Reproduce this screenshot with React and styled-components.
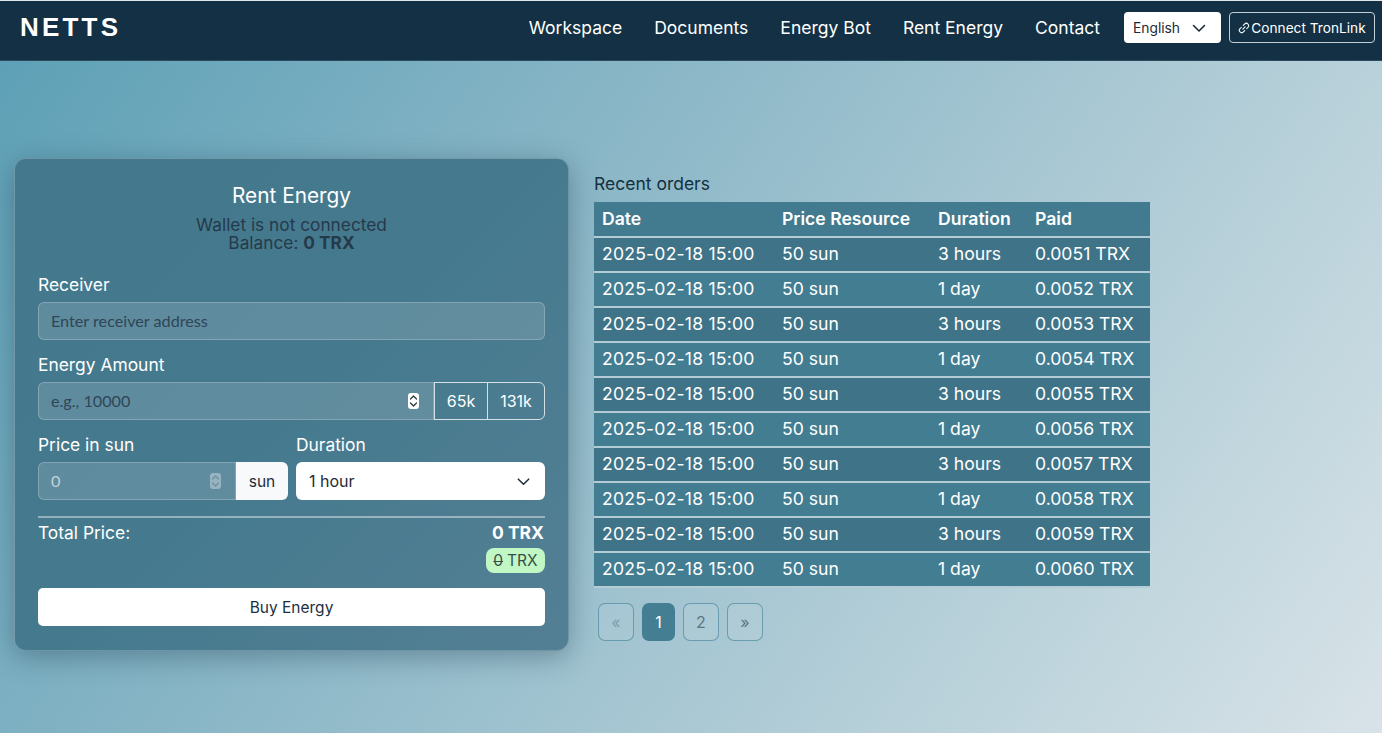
import React from "react";
import styled, { createGlobalStyle } from "styled-components";

const Global = createGlobalStyle`
  html, body { margin: 0; padding: 0; height: 100%; }
  body { font-family: Inter, "Liberation Sans", sans-serif; overflow: hidden; }
  * { box-sizing: border-box; }
`;
const Page = styled.div`
  width: 1382px; height: 733px; overflow: hidden; display: flex; flex-direction: column;
  background: linear-gradient(125deg, #5b9fb5 0%, #8db8c8 40%, #b5cfd8 72%, #d8e3e8 100%);
`;
const Nav = styled.header`
  height: 61px; flex: none; background: #133044; border-top: 1px solid #dfe8ec;
  border-bottom: 1px solid #2c4a5e;
  display: flex; align-items: center; padding: 0 7px 6px 20px;
`;
const Logo = styled.div`
  font-family: "Liberation Sans", Arial, sans-serif; font-weight: 700; font-size: 26px; color: #fff;
  letter-spacing: 3.2px; margin-right: auto;
`;
const NavLink = styled.a`
  color: #fff; font-size: 17.5px; margin-right: 32px; white-space: nowrap;
  &:nth-of-type(5) { margin-right: 24px; }
`;
const Lang = styled.div`
  width: 97px; height: 31px; background: #fff; border-radius: 4px; color: #1c2b36;
  font-size: 13.8px; display: flex; align-items: center; justify-content: space-between;
  padding: 0 14px 0 9px; margin-right: 8px;
`;
const Connect = styled.button`
  width: 146px; height: 31px; background: transparent; border: 1px solid #c4d0d7; border-radius: 4px;
  color: #fff; font: 13.7px Inter, sans-serif; display: flex; align-items: center; justify-content: center;
  gap: 1px; padding: 0; white-space: nowrap;
`;
const Main = styled.main`
  display: flex; align-items: flex-start; gap: 25px; padding: 97px 0 0 14px;
`;
const Card = styled.section`
  width: 555px; height: 493px; flex: none; padding: 24px 23px 0;
  border-radius: 12px; border: 1px solid rgba(255,255,255,.22);
  background: linear-gradient(135deg, #44788d 0%, #457a8e 50%, #547f94 100%);
  box-shadow: 0 6px 28px rgba(30,60,80,.4);
  display: flex; flex-direction: column;
`;
const CardTitle = styled.h2`
  margin: 0; text-align: center; color: #fff; font-size: 20.8px; font-weight: 400; line-height: 26px;
`;
const Wallet = styled.p`
  margin: 7px 0 0; text-align: center; color: #25394a; font-size: 17.3px; line-height: 18px;
  b { font-weight: 700; }
`;
const Label = styled.label`
  display: block; color: #fff; font-size: 17.4px; line-height: 24px; margin-bottom: 5px;
`;
const Field = styled.div` margin-top: ${p => p.$top}px; `;
const Input = styled.div`
  height: 38px; flex: 1; min-width: 0; background: rgba(255,255,255,.14);
  border: 1px solid rgba(255,255,255,.22);
  border-radius: ${p => p.$joined ? "6px 0 0 6px" : "6px"};
  display: flex; align-items: center; justify-content: space-between;
  padding: 0 14px 2px 12px;
  font-family: Lato, sans-serif; font-size: 16.2px; color: ${p => p.$light ? "#c2d3da" : "#2f4656"};
`;
const Spinner = styled.span`
  width: 11px; height: 16px; border-radius: 3px; margin-top: 2px;
  background: ${p => p.$dim ? "rgba(255,255,255,.35)" : "#fff"};
  display: flex; align-items: center; justify-content: center;
`;
const InputGroup = styled.div` display: flex; `;
const Quick = styled.button`
  height: 38px; background: transparent; border: 1px solid #d5e0e5; color: #fff;
  font: 16px Inter, sans-serif; padding: 0; width: ${p => p.$w}px;
  margin-left: ${p => p.$first ? 0 : -1}px;
  border-radius: ${p => p.$first ? 0 : "0 6px 6px 0"};
`;
const TwoCol = styled.div`
  display: grid; grid-template-columns: 250px 249px; gap: 8px; margin-top: 13px;
`;
const Addon = styled.div`
  width: 52px; height: 38px; background: #f7f9fa; border-radius: 0 6px 6px 0; color: #1e2b36;
  font-size: 15.5px; display: flex; align-items: center; justify-content: center;
`;
const Select = styled.div`
  height: 38px; background: #fff; border-radius: 6px; color: #1e2b36; font-size: 16px;
  display: flex; align-items: center; justify-content: space-between; padding: 0 14px 0 13px;
`;
const Divider = styled.hr`
  border: 0; height: 2px; background: rgba(255,255,255,.42); margin: 16px 0 0;
`;
const TotalRow = styled.div`
  display: flex; justify-content: space-between; align-items: flex-start; margin-top: 3px;
`;
const TotalLabel = styled.span` color: #fff; font-size: 17.4px; line-height: 24px; `;
const TotalValue = styled.div`
  display: flex; flex-direction: column; align-items: flex-end; gap: 3px;
`;
const Amount = styled.b` color: #fff; font-size: 17.5px; line-height: 24px; font-weight: 700; padding-right: 1px; `;
const Pill = styled.span`
  width: 59px; height: 25px; background: #c1f7c4; border-radius: 8px; color: #35504a; font-size: 15.5px;
  display: flex; align-items: center; justify-content: center;
  s { text-decoration-thickness: 1px; margin-right: 4px; }
`;
const Buy = styled.button`
  height: 38px; background: #fff; border: 0; border-radius: 5px; color: #1c2f3f; font: 15.5px Inter, sans-serif;
  margin-top: 15px; width: 100%;
`;
const Orders = styled.section` width: 556px; flex: none; padding-top: 15px; `;
const OrdersTitle = styled.h3`
  margin: 0; color: #14303f; font-size: 17.5px; font-weight: 400; line-height: 21px; height: 29px;
`;
const Table = styled.table`
  width: 556px; border-collapse: collapse; table-layout: fixed; color: #fff; font-size: 17.6px;
`;
const Head = styled.th`
  background: #427b90; text-align: left; font-weight: 600; height: 35px; padding: 0 8px 2px;
  border-bottom: 2px solid #b4ccd5; width: ${p => p.$w}px;
`;
const Cell = styled.td`
  background: ${p => p.$odd ? "#3f7488" : "#437d92"}; height: 35px; padding: 0 8px 2px;
  border-bottom: 2px solid #b4ccd5; white-space: nowrap;
`;
const DateCell = styled(Cell)` letter-spacing: .2px; `;
const Pager = styled.nav` display: flex; margin: 15px 0 0 4px; gap: 8px; `;
const PageBtn = styled.button`
  width: ${p => p.$w}px; height: 38px; border-radius: 7px; padding: 0;
  font: 16px Inter, sans-serif;
  border: ${p => p.$active ? "2px solid #447e93" : "1.500px solid rgba(60,125,148,.6)"};
  background: ${p => p.$active ? "#447e93" : "rgba(255,255,255,.07)"};
  color: ${p => p.$active ? "#fff" : p.$dim ? "#7c9fae" : "#5b7683"};
`;

const rows = [
  ["3 hours", "0.0051 TRX"], ["1 day", "0.0052 TRX"], ["3 hours", "0.0053 TRX"], ["1 day", "0.0054 TRX"],
  ["3 hours", "0.0055 TRX"], ["1 day", "0.0056 TRX"], ["3 hours", "0.0057 TRX"], ["1 day", "0.0058 TRX"],
  ["3 hours", "0.0059 TRX"], ["1 day", "0.0060 TRX"],
];
const Chevron = ({ size = 16, color = "#1e2b36" }) => (
  <svg width={size} height={size} viewBox="0 0 16 16" fill="none"><path d="M2.500 5.500 8 11l5.500-5.500" stroke={color} strokeWidth="1.6" strokeLinecap="round" strokeLinejoin="round" /></svg>
);
const SpinIcon = ({ color }) => (
  <svg width="9" height="14" viewBox="0 0 9 14" fill="none"><path d="M1.500 5 4.500 2l3 3M1.500 9l3 3 3-3" stroke={color} strokeWidth="1.2" strokeLinecap="round" strokeLinejoin="round" /></svg>
);
const LinkIcon = () => (
  <svg width="12" height="12" viewBox="0 0 16 16" fill="none" stroke="#fff" strokeWidth="1.4" strokeLinecap="round"><path d="M6.500 9.500 9.500 6.500M7 4.500l1.800-1.800a3 3 0 0 1 4.500 4.500L11.500 9M9 11.500l-1.800 1.800a3 3 0 0 1-4.500-4.500L4.500 7" /></svg>
);

export default function App() {
  return (
    <Page>
      <Global />
      <Nav>
        <Logo>NETTS</Logo>
        <NavLink>Workspace</NavLink>
        <NavLink>Documents</NavLink>
        <NavLink>Energy Bot</NavLink>
        <NavLink>Rent Energy</NavLink>
        <NavLink>Contact</NavLink>
        <Lang>English <Chevron /></Lang>
        <Connect><LinkIcon />Connect TronLink</Connect>
      </Nav>
      <Main>
        <Card>
          <CardTitle>Rent Energy</CardTitle>
          <Wallet>Wallet is not connected<br />Balance: <b>0 TRX</b></Wallet>
          <Field $top={21}>
            <Label>Receiver</Label>
            <Input>Enter receiver address</Input>
          </Field>
          <Field $top={13}>
            <Label>Energy Amount</Label>
            <InputGroup>
              <Input $joined>e.g., 10000<Spinner><SpinIcon color="#22343f" /></Spinner></Input>
              <Quick $first $w={54}>65k</Quick>
              <Quick $w={58}>131k</Quick>
            </InputGroup>
          </Field>
          <TwoCol>
            <div>
              <Label>Price in sun</Label>
              <InputGroup>
                <Input $joined $light>0<Spinner $dim><SpinIcon color="#6d8f9e" /></Spinner></Input>
                <Addon>sun</Addon>
              </InputGroup>
            </div>
            <div>
              <Label>Duration</Label>
              <Select>1 hour <Chevron size={15} /></Select>
            </div>
          </TwoCol>
          <Divider />
          <TotalRow>
            <TotalLabel>Total Price:</TotalLabel>
            <TotalValue>
              <Amount>0 TRX</Amount>
              <Pill><s>0</s> TRX</Pill>
            </TotalValue>
          </TotalRow>
          <Buy>Buy Energy</Buy>
        </Card>
        <Orders>
          <OrdersTitle>Recent orders</OrdersTitle>
          <Table>
            <thead>
              <tr>
                <Head $w={180}>Date</Head>
                <Head $w={156}>Price Resource</Head>
                <Head $w={97}>Duration</Head>
                <Head $w={123}>Paid</Head>
              </tr>
            </thead>
            <tbody>
              {rows.map((r, i) => (
                <tr key={r[1]}>
                  <DateCell $odd={i % 2 === 0}>2025-02-18 15:00</DateCell>
                  <Cell $odd={i % 2 === 0}>50 sun</Cell>
                  <Cell $odd={i % 2 === 0}>{r[0]}</Cell>
                  <Cell $odd={i % 2 === 0}>{r[1]}</Cell>
                </tr>
              ))}
            </tbody>
          </Table>
          <Pager>
            <PageBtn $w={36} $dim>«</PageBtn>
            <PageBtn $w={33} $active>1</PageBtn>
            <PageBtn $w={36}>2</PageBtn>
            <PageBtn $w={36}>»</PageBtn>
          </Pager>
        </Orders>
      </Main>
    </Page>
  );
}
